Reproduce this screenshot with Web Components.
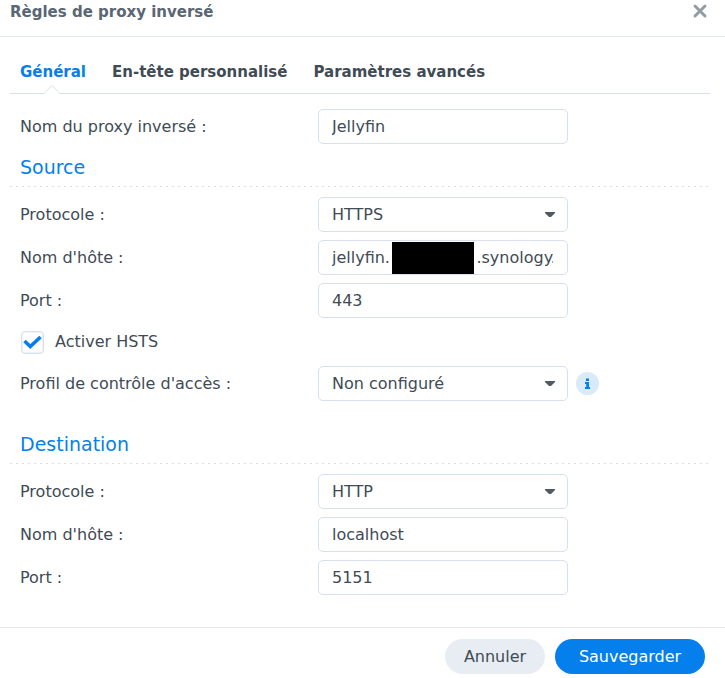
<!DOCTYPE html>
<html lang="fr">
<head>
<meta charset="UTF-8">
<meta name="viewport" content="width=device-width, initial-scale=1.0">
<title>Règles de proxy inversé</title>
<style>
    :root {
        --blue: #057feb;
        --text: #414b55;
        --line: #d7e1eb;
        --field-width: 250px;
        --label-width: 298px;
    }
    body { margin: 0; background: #fff; color: var(--text); font-family: Verdana, "DejaVu Sans", sans-serif; font-size: 16px; line-height: 24px; }
</style>
</head>
<body>
<modal-window heading="Règles de proxy inversé">
    <tab-bar tabs="Général|En-tête personnalisé|Paramètres avancés"></tab-bar>
    <text-field label="Nom du proxy inversé :" value="Jellyfin"></text-field>
    <form-section heading="Source">
        <select-field label="Protocole :" options="HTTPS|HTTP"></select-field>
        <text-field label="Nom d'hôte :" value="jellyfin.                 .synology.me" masked></text-field>
        <text-field label="Port :" value="443"></text-field>
        <check-field label="Activer HSTS"></check-field>
        <select-field label="Profil de contrôle d'accès :" options="Non configuré">
            <info-button></info-button>
        </select-field>
    </form-section>
    <form-section heading="Destination" class="spaced">
        <select-field label="Protocole :" options="HTTP|HTTPS"></select-field>
        <text-field label="Nom d'hôte :" value="localhost"></text-field>
        <text-field label="Port :" value="5151"></text-field>
    </form-section>
    <pill-button slot="actions">Annuler</pill-button>
    <pill-button slot="actions" primary>Sauvegarder</pill-button>
</modal-window>

<script>
const rowStyles = `
    :host { display: block; padding: 0 10px; }
    .row { display: flex; align-items: center; }
    .row > label { flex: 0 1 var(--label-width); }
    .control { display: grid; flex: 0 1 var(--field-width); min-width: 0; }
    .control > * { grid-area: 1 / 1; }
    input, select {
        appearance: none; box-sizing: border-box; width: 100%; min-width: 0; height: 35px; margin: 0; padding: 0 14px 0 13px;
        border: 1px solid var(--line); border-radius: 5px; background: #fff; color: inherit; font: inherit; outline: none;
    }
    input:focus, select:focus { border-color: var(--blue); }
`;

class ModalWindow extends HTMLElement {
    constructor() {
        super();
        this.attachShadow({ mode: 'open' });
        this.shadowRoot.innerHTML = `
            <style>
                :host { display: flex; flex-direction: column; min-height: 100vh; }
                header { display: flex; justify-content: space-between; align-items: flex-start; height: 36px; border-bottom: 1px solid #dfe7ef; padding: 0 17px 0 10px; }
                h1 { margin: 0; font-size: 15px; line-height: 24px; font-weight: bold; color: #5a6673; }
                header button { display: flex; padding: 3px 0; border: 0; background: none; cursor: pointer; }
                main { flex: 1; padding: 0 15px 20px 10px; }
                footer { display: flex; justify-content: flex-end; gap: 10px; padding: 11px 20px 4px; border-top: 1px solid #e4e8ec; }
            </style>
            <header>
                <h1></h1>
                <button type="button" aria-label="Fermer">
                    <svg width="16" height="16" viewBox="0 0 16 16"><path d="M3 3L13 13M13 3L3 13" stroke="#939ca5" stroke-width="3" stroke-linecap="round"/></svg>
                </button>
            </header>
            <main><slot></slot></main>
            <footer><slot name="actions"></slot></footer>
        `;
    }

    connectedCallback() {
        this.shadowRoot.querySelector('h1').textContent = this.getAttribute('heading');
        this.shadowRoot.querySelector('button').addEventListener('click', () => this.remove());
    }
}

class TabBar extends HTMLElement {
    constructor() {
        super();
        this.attachShadow({ mode: 'open' });
        this.shadowRoot.innerHTML = `
            <style>
                :host { display: block; padding-top: 23px; margin-bottom: 15px; }
                div { display: flex; gap: 26px; padding: 0 10px; border-bottom: 1px solid var(--line); }
                button { position: relative; padding: 0 0 9px; border: 0; background: none; color: inherit; font: bold 15px/24px Verdana, "DejaVu Sans", sans-serif; white-space: nowrap; cursor: pointer; }
                button[aria-selected="true"] { color: var(--blue); }
                svg { display: none; position: absolute; left: 50%; bottom: -1px; margin-left: -10px; }
                button[aria-selected="true"] svg { display: block; }
            </style>
            <div role="tablist"></div>
        `;
    }

    connectedCallback() {
        const list = this.shadowRoot.querySelector('div');
        this.getAttribute('tabs').split('|').forEach((name, i) => {
            const tab = document.createElement('button');
            tab.type = 'button';
            tab.setAttribute('role', 'tab');
            tab.setAttribute('aria-selected', i === 0);
            tab.innerHTML = `${name}<svg width="18" height="10" viewBox="0 0 18 10"><path d="M1 10L9 1L17 10Z" fill="#fff"/><path d="M0 9.5H1L9 1.5L17 9.5H18" fill="none" stroke="#d7e1eb"/></svg>`;
            tab.addEventListener('click', () => {
                list.querySelectorAll('button').forEach(b => b.setAttribute('aria-selected', b === tab));
            });
            list.appendChild(tab);
        });
    }
}

class FormSection extends HTMLElement {
    constructor() {
        super();
        this.attachShadow({ mode: 'open' });
        this.shadowRoot.innerHTML = `
            <style>
                :host { display: block; }
                :host(.spaced) { margin-top: 20px; }
                h2 { margin: 0; padding: 10px 10px 6px; font-size: 19px; line-height: 26px; font-weight: normal; color: var(--blue); }
                .rule { height: 1px; background: repeating-linear-gradient(90deg, #dcdfe2 0 2px, transparent 2px 6px); }
                .rows { display: flex; flex-direction: column; gap: 8px; padding-top: 10px; }
            </style>
            <h2></h2>
            <div class="rule"></div>
            <div class="rows"><slot></slot></div>
        `;
    }

    connectedCallback() {
        this.shadowRoot.querySelector('h2').textContent = this.getAttribute('heading');
    }
}

class TextField extends HTMLElement {
    constructor() {
        super();
        this.attachShadow({ mode: 'open' });
        this.shadowRoot.innerHTML = `
            <style>
                ${rowStyles}
                .mask { display: none; width: 82px; height: 32px; margin-left: 74px; align-self: center; background: #000; z-index: 1; }
                :host([masked]) .mask { display: block; }
            </style>
            <div class="row">
                <label for="field"></label>
                <div class="control"><input type="text" id="field"><span class="mask"></span></div>
            </div>
        `;
    }

    connectedCallback() {
        this.shadowRoot.querySelector('label').textContent = this.getAttribute('label');
        this.shadowRoot.querySelector('input').value = this.getAttribute('value');
    }
}

class SelectField extends HTMLElement {
    constructor() {
        super();
        this.attachShadow({ mode: 'open' });
        this.shadowRoot.innerHTML = `
            <style>
                ${rowStyles}
                select { padding-right: 32px; }
                svg { place-self: center end; margin-right: 12px; pointer-events: none; }
            </style>
            <div class="row">
                <label for="field"></label>
                <div class="control">
                    <select id="field"></select>
                    <svg width="12" height="6" viewBox="0 0 12 6"><path d="M1 0H11V1L7 5H5L1 1Z" fill="#505a64"/></svg>
                </div>
                <slot></slot>
            </div>
        `;
    }

    connectedCallback() {
        this.shadowRoot.querySelector('label').textContent = this.getAttribute('label');
        const select = this.shadowRoot.querySelector('select');
        this.getAttribute('options').split('|').forEach(name => select.add(new Option(name)));
    }
}

class CheckField extends HTMLElement {
    constructor() {
        super();
        this.attachShadow({ mode: 'open' });
        this.shadowRoot.innerHTML = `
            <style>
                :host { display: block; padding: 0 11px; }
                label { display: flex; align-items: center; gap: 11px; height: 32px; }
                .box { display: grid; }
                .box > * { grid-area: 1 / 1; }
                input { appearance: none; box-sizing: border-box; width: 23px; height: 23px; margin: 0; border: 1px solid var(--line); border-radius: 4px; box-shadow: inset 0 0 0 1px #f0f4f8; }
                svg { display: none; pointer-events: none; }
                input:checked + svg { display: block; }
            </style>
            <label>
                <span class="box">
                    <input type="checkbox" checked>
                    <svg width="23" height="23" viewBox="0 0 23 23"><path d="M3.5 10L9.3 15.5L19.5 6" fill="none" stroke="#057feb" stroke-width="3.6"/></svg>
                </span>
                <span class="text"></span>
            </label>
        `;
    }

    connectedCallback() {
        this.shadowRoot.querySelector('.text').textContent = this.getAttribute('label');
    }
}

class InfoButton extends HTMLElement {
    constructor() {
        super();
        this.attachShadow({ mode: 'open' });
        this.shadowRoot.innerHTML = `
            <style>
                :host { display: block; margin-left: 8px; }
                button { display: block; padding: 0; border: 0; background: none; cursor: pointer; }
                svg { display: block; }
            </style>
            <button type="button" aria-label="Informations">
                <svg width="23" height="23" viewBox="0 0 23 23">
                    <circle cx="11.5" cy="11.5" r="11.5" fill="#d9eafb"/>
                    <path d="M10 6.5H13V9H10ZM9 10H13V15H14V17H9V15H10.2V12H9Z" fill="#057feb"/>
                </svg>
            </button>
        `;
    }
}

class PillButton extends HTMLElement {
    constructor() {
        super();
        this.attachShadow({ mode: 'open' });
        this.shadowRoot.innerHTML = `
            <style>
                :host { display: block; }
                button { min-width: 100px; height: 35px; padding: 0 18px; border: 0; border-radius: 18px; background: #e8edf4; color: inherit; font: inherit; cursor: pointer; }
                :host([primary]) button { min-width: 150px; background: var(--blue); color: #fff; }
            </style>
            <button type="button"><slot></slot></button>
        `;
    }
}

customElements.define('modal-window', ModalWindow);
customElements.define('tab-bar', TabBar);
customElements.define('form-section', FormSection);
customElements.define('text-field', TextField);
customElements.define('select-field', SelectField);
customElements.define('check-field', CheckField);
customElements.define('info-button', InfoButton);
customElements.define('pill-button', PillButton);
</script>
</body>
</html>
